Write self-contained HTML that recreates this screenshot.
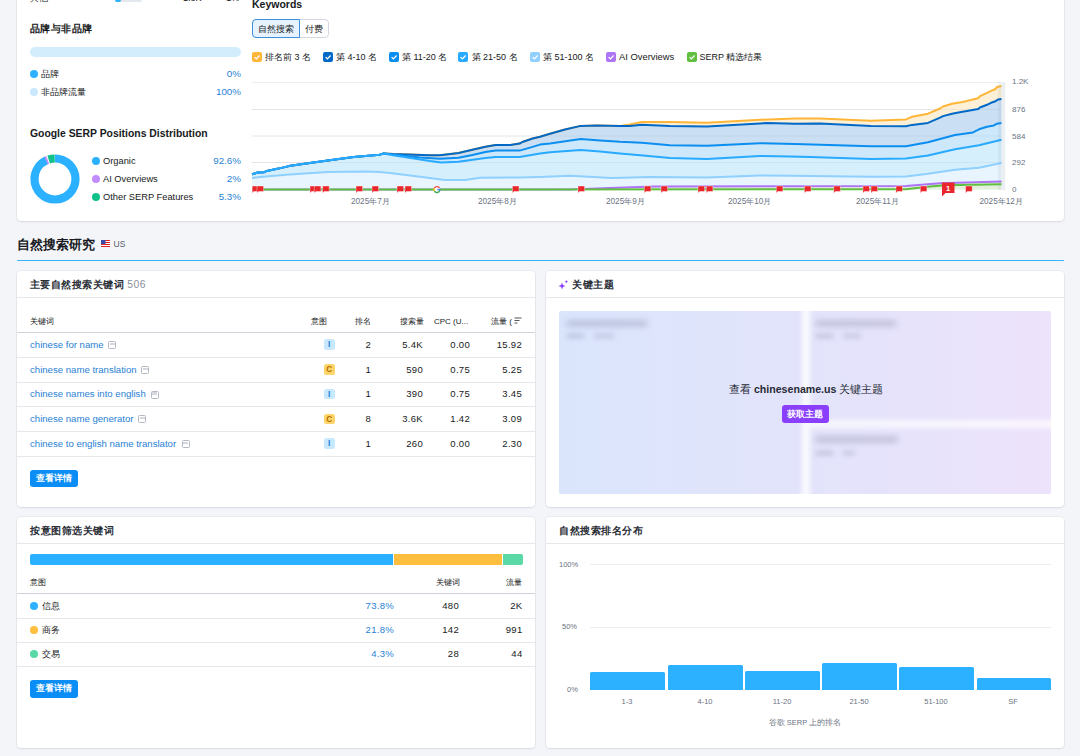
<!DOCTYPE html>
<html><head><meta charset="utf-8">
<style>
*{box-sizing:border-box;margin:0;padding:0}
html,body{width:1080px;height:756px;overflow:hidden;background:#f4f5f9;font-family:"Liberation Sans",sans-serif;color:#171a22}
.a{position:absolute;white-space:nowrap}
.card{position:absolute;background:#fff;border-radius:4px;box-shadow:0 0 0 1px rgba(20,30,60,0.04),0 1px 2px rgba(20,30,60,0.08)}
.t{font-size:9px;line-height:12px}
.g{color:#6b7382}
.lnk{color:#2a7fd4}
.hd{font-weight:bold}
.dot{position:absolute;width:8px;height:8px;border-radius:50%}
.hline{position:absolute;height:1px;background:#e6e8ee}
.cb{position:absolute;width:10px;height:10px;border-radius:2px}
.cb svg{position:absolute;left:0;top:0}
.badge{position:absolute;width:10.5px;height:10.5px;border-radius:2.5px;font-size:8.3px;font-weight:bold;line-height:11.2px;text-align:center}
.btn{position:absolute;background:#0a8df5;color:#fff;font-weight:bold;font-size:8.5px;border-radius:3px;text-align:center}
.ico{position:absolute;width:8px;height:8px;border:1px solid #b3b8c2;border-radius:1.5px}
.ico:after{content:"";position:absolute;left:0.5px;right:0.5px;top:0.5px;height:2.5px;background:#d5d8de}
.r{text-align:right}
</style></head><body>

<!-- top card -->
<div class="card" style="left:17px;top:-10px;width:1047px;height:230.5px"></div>
<div class="a t" style="left:30px;top:-8px;">其他</div>
<div class="a" style="left:115px;top:-2px;width:27px;height:4px;border-radius:2px;background:#e3e7ee"></div>
<div class="a" style="left:115px;top:-2px;width:6px;height:4px;border-radius:2px;background:#2bb1ff"></div>
<div class="a t" style="left:183px;top:-8px;">1.8K</div>
<div class="a t" style="left:221px;top:-8px;">&lt;1%</div>

<div class="a hd" style="left:30px;top:22px;font-size:10.2px;letter-spacing:0.45px;line-height:14px">品牌与非品牌</div>
<div class="a" style="left:30px;top:47px;width:211px;height:10px;border-radius:5px;background:#d4edfd"></div>
<div class="dot" style="left:30px;top:70px;background:#2bb1ff"></div>
<div class="a t" style="left:41px;top:68px;font-size:9.3px">品牌</div>
<div class="a t lnk r" style="left:180px;width:61px;top:68px;font-size:9.8px">0%</div>
<div class="dot" style="left:30px;top:88px;background:#c9e8fd"></div>
<div class="a t" style="left:41px;top:86px;font-size:9.3px">非品牌流量</div>
<div class="a t lnk r" style="left:180px;width:61px;top:86px;font-size:9.8px">100%</div>

<div class="a hd" style="left:30px;top:127px;font-size:10.4px;line-height:14px">Google SERP Positions Distribution</div>
<svg class="a" style="left:29.6px;top:153.6px" width="50" height="50" viewBox="0 0 50 50">
  <g transform="translate(25,25)">
    <circle r="20.5" fill="none" stroke="#2bb1ff" stroke-width="8.2" stroke-dasharray="119.3 200" transform="rotate(-90)"/>
    <circle r="20.5" fill="none" stroke="#c28cff" stroke-width="8.2" stroke-dasharray="1.9 200" transform="rotate(244)"/>
    <circle r="20.5" fill="none" stroke="#10c18a" stroke-width="8.2" stroke-dasharray="6.2 200" transform="rotate(252)"/>
  </g>
</svg>
<div class="dot" style="left:92px;top:156.5px;background:#2bb1ff"></div>
<div class="a t" style="left:103px;top:154.5px;font-size:9.3px">Organic</div>
<div class="a t lnk r" style="left:180px;width:61px;top:154.5px;font-size:9.8px">92.6%</div>
<div class="dot" style="left:92px;top:174.5px;background:#c28cff"></div>
<div class="a t" style="left:103px;top:172.5px;font-size:9.3px">AI Overviews</div>
<div class="a t lnk r" style="left:180px;width:61px;top:172.5px;font-size:9.8px">2%</div>
<div class="dot" style="left:92px;top:192.5px;background:#10c18a"></div>
<div class="a t" style="left:103px;top:190.5px;font-size:9.3px">Other SERP Features</div>
<div class="a t lnk r" style="left:180px;width:61px;top:190.5px;font-size:9.8px">5.3%</div>

<!-- keywords chart -->
<div class="a hd" style="left:252px;top:-3.5px;font-size:10.5px;line-height:14px">Keywords</div>
<div class="a" style="left:252px;top:19px;width:77px;height:19px;border:1px solid #d3d8e0;border-radius:4px"></div>
<div class="a" style="left:252px;top:19px;width:48px;height:19px;border:1px solid #3d8fe0;border-radius:4px 0 0 4px;background:#e6f3fe"></div>
<div class="a t" style="left:258px;top:23px">自然搜索</div>
<div class="a t" style="left:305px;top:23px">付费</div>

<div class="cb" style="left:252px;top:51.5px;background:#ffb638"><svg width="10" height="10"><path d="M2.6 5.1l1.8 1.8 3.2-3.4" stroke="#fff" stroke-width="1.3" fill="none"/></svg></div>
<div class="a t" style="left:265px;top:51px">排名前 3 名</div>
<div class="cb" style="left:323px;top:51.5px;background:#0068c6"><svg width="10" height="10"><path d="M2.6 5.1l1.8 1.8 3.2-3.4" stroke="#fff" stroke-width="1.3" fill="none"/></svg></div>
<div class="a t" style="left:336px;top:51px">第 4-10 名</div>
<div class="cb" style="left:389px;top:51.5px;background:#0b8ef0"><svg width="10" height="10"><path d="M2.6 5.1l1.8 1.8 3.2-3.4" stroke="#fff" stroke-width="1.3" fill="none"/></svg></div>
<div class="a t" style="left:402px;top:51px">第 11-20 名</div>
<div class="cb" style="left:458px;top:51.5px;background:#27aaff"><svg width="10" height="10"><path d="M2.6 5.1l1.8 1.8 3.2-3.4" stroke="#fff" stroke-width="1.3" fill="none"/></svg></div>
<div class="a t" style="left:471.5px;top:51px">第 21-50 名</div>
<div class="cb" style="left:530px;top:51.5px;background:#8fd0ff"><svg width="10" height="10"><path d="M2.6 5.1l1.8 1.8 3.2-3.4" stroke="#fff" stroke-width="1.3" fill="none"/></svg></div>
<div class="a t" style="left:543px;top:51px">第 51-100 名</div>
<div class="cb" style="left:605.5px;top:51.5px;background:#ad74f6"><svg width="10" height="10"><path d="M2.6 5.1l1.8 1.8 3.2-3.4" stroke="#fff" stroke-width="1.3" fill="none"/></svg></div>
<div class="a t" style="left:619px;top:51px;font-size:9.4px">AI Overviews</div>
<div class="cb" style="left:686.5px;top:51.5px;background:#60bf3f"><svg width="10" height="10"><path d="M2.6 5.1l1.8 1.8 3.2-3.4" stroke="#fff" stroke-width="1.3" fill="none"/></svg></div>
<div class="a t" style="left:699.5px;top:51px">SERP 精选结果</div>

<svg class="a" style="left:0;top:0" width="1080" height="220" viewBox="0 0 1080 220">
  <g stroke="#eceef2" stroke-width="1">
    <line x1="252" y1="82.5" x2="1001" y2="82.5"/>
    <line x1="252" y1="109.5" x2="1001" y2="109.5"/>
    <line x1="252" y1="136" x2="1001" y2="136"/>
    <line x1="252" y1="162.5" x2="1001" y2="162.5"/>
  </g>
<polygon points="252,174.2 257.8,172.5 264.3,172.2 266.9,170.9 278.5,168.6 288.9,166.1 304.5,163.8 327.8,160.6 353.8,157.1 379.7,154.7 383.6,153.4 393,154 430,155.2 440,155.2 458.5,152.9 472.4,149.8 485.4,146.7 495.6,145 510.4,145 519.6,143.6 522.4,142 532.6,138.5 540,136.7 550,133.7 565,129.5 580.7,125.9 597,125.6 620,126 629.6,124.4 641.8,122 670,122 707,122.8 760,119.8 795,118.5 820,118.4 871,120.8 906,119.4 912,116.8 928,113.7 940,108.5 943,106.5 952,103.8 961,102.2 967,100.9 974,99.2 978,98.2 980,96.2 987,92.9 991,90.9 995,89.3 997,87 1001.5,86 1001.5,98.9 998,99.5 995.5,101.2 991,102.8 987,104.8 980,107.5 978,109.1 967,111.1 961,112.1 952,113.8 943,116.1 940,117.7 928,122.9 912,124.9 906,126.3 871,125.9 820,123.5 795,123.7 767,123.1 760,123.4 707,126.5 670,126 641.8,124.8 629.6,126 620,126 597,125.6 580.7,125.9 565,129.5 550,133.7 540,136.7 532.6,138.5 522.4,142 519.6,143.6 510.4,145 495.6,145 485.4,146.7 472.4,149.8 458.5,152.9 440,155.2 430,155.2 393,154 383.6,153.4 379.7,154.7 353.8,157.1 327.8,160.6 304.5,163.8 288.9,166.1 278.5,168.6 266.9,170.9 264.3,172.2 257.8,172.5 252,174.2" fill="#fdf0d6"/>
<polygon points="252,174.2 257.8,172.5 264.3,172.2 266.9,170.9 278.5,168.6 288.9,166.1 304.5,163.8 327.8,160.6 353.8,157.1 379.7,154.7 383.6,153.4 393,154 430,155.2 440,155.2 458.5,152.9 472.4,149.8 485.4,146.7 495.6,145 510.4,145 519.6,143.6 522.4,142 532.6,138.5 540,136.7 550,133.7 565,129.5 580.7,125.9 597,125.6 620,126 629.6,126 641.8,124.8 670,126 707,126.5 760,123.4 767,123.1 795,123.7 820,123.5 871,125.9 906,126.3 912,124.9 928,122.9 940,117.7 943,116.1 952,113.8 961,112.1 967,111.1 978,109.1 980,107.5 987,104.8 991,102.8 995.5,101.2 998,99.5 1001.5,98.9 1001.5,123 997,123.7 994,125.4 987,126.7 979,129.3 973,132.4 955,135 928,142.2 906,146.3 871,146.3 795,144 760,143.2 707,145.8 670,145.2 641.8,142.8 620,141.8 600,140.4 580.7,139.1 550,143.5 540,144.6 532.6,146.9 519.6,150.6 495.6,150.6 485.4,152 472.4,155 458.5,157.8 440,158.7 420,157.5 393,154.6 383.6,153.4 379.7,154.7 353.8,157.1 327.8,160.6 304.5,163.8 288.9,166.1 278.5,168.6 266.9,170.9 264.3,172.2 257.8,172.5 252,174.2" fill="#cadff3"/>
<polygon points="252,174.2 257.8,172.5 264.3,172.2 266.9,170.9 278.5,168.6 288.9,166.1 304.5,163.8 327.8,160.6 353.8,157.1 379.7,154.7 383.6,153.4 393,154.6 420,157.5 440,158.7 458.5,157.8 472.4,155 485.4,152 495.6,150.6 519.6,150.6 532.6,146.9 540,144.6 550,143.5 580.7,139.1 600,140.4 620,141.8 641.8,142.8 670,145.2 707,145.8 760,143.2 795,144 871,146.3 906,146.3 928,142.2 955,135 973,132.4 979,129.3 987,126.7 994,125.4 997,123.7 1001.5,123 1001.5,139.8 979,145.3 955,149.3 928,155.4 906,158.5 871,158.9 810,157 790,156.5 760,156 707,159 670,158 643,155.5 620,153.4 600,151.5 580.7,149.9 550,152.2 540,153.4 519.6,157 495.6,157 485.4,158 458.5,161.7 441,162.4 430,161 393,155.2 383.6,153.4 379.7,154.7 353.8,157.1 327.8,160.6 304.5,163.8 288.9,166.1 278.5,168.6 266.9,170.9 264.3,172.2 257.8,172.5 252,174.2" fill="#cde8fb"/>
<polygon points="252,174.2 257.8,172.5 264.3,172.2 266.9,170.9 278.5,168.6 288.9,166.1 304.5,163.8 327.8,160.6 353.8,157.1 379.7,154.7 383.6,153.4 393,155.2 430,161 441,162.4 458.5,161.7 485.4,158 495.6,157 519.6,157 540,153.4 550,152.2 580.7,149.9 600,151.5 620,153.4 643,155.5 670,158 707,159 760,156 790,156.5 810,157 871,158.9 906,158.5 928,155.4 955,149.3 979,145.3 1001.5,139.8 1001.5,163 979,167.7 955,169.7 928,173.8 906,176.4 871,176.8 790,175.8 760,175.4 707,177.4 650,177 612,178 570,175.8 540,177 520,177.4 480,177.8 465,180 445,180 430,178 400,174.2 390,172.9 379.7,172 366.7,171.6 327.8,172 308.4,173.3 286.3,174.8 263,176.8 252,178.1" fill="#d6effd"/>
<polygon points="252,178.1 263,176.8 286.3,174.8 308.4,173.3 327.8,172 366.7,171.6 379.7,172 390,172.9 400,174.2 430,178 445,180 465,180 480,177.8 520,177.4 540,177 570,175.8 612,178 650,177 707,177.4 760,175.4 790,175.8 871,176.8 906,176.4 928,173.8 955,169.7 979,167.7 1001.5,163 1001,189.5 252,189.5" fill="#e9f5fe"/>
<polygon points="252,189.4 570,189.4 610,188 654,186.6 906,186 940,183.2 1001.5,181.6 1001.5,184.2 945,185.2 930,186.5 906,189.3 252,189.5" fill="#e6efe0"/>
<polygon points="252,189.5 906,189.3 930,186.5 945,185.2 1001.5,184.2 1001,189.5 252,189.5" fill="#e3f1dc"/>
<g stroke="rgba(60,70,90,0.06)" stroke-width="1"><line x1="252" y1="109.5" x2="1001" y2="109.5"/><line x1="252" y1="136" x2="1001" y2="136"/><line x1="252" y1="162.5" x2="1001" y2="162.5"/></g>
<polyline points="252,189.4 570,189.4 610,188 654,186.6 906,186 940,183.2 1001.5,181.6" fill="none" stroke="#ad74f6" stroke-width="2" stroke-linejoin="round"/>
<polyline points="252,189.5 906,189.3 930,186.5 945,185.2 1001.5,184.2" fill="none" stroke="#60bf3f" stroke-width="2" stroke-linejoin="round"/>
<polyline points="252,174.2 257.8,172.5 264.3,172.2 266.9,170.9 278.5,168.6 288.9,166.1 304.5,163.8 327.8,160.6 353.8,157.1 379.7,154.7 383.6,153.4 393,154 430,155.2 440,155.2 458.5,152.9 472.4,149.8 485.4,146.7 495.6,145 510.4,145 519.6,143.6 522.4,142 532.6,138.5 540,136.7 550,133.7 565,129.5 580.7,125.9 597,125.6 620,126 629.6,124.4 641.8,122 670,122 707,122.8 760,119.8 795,118.5 820,118.4 871,120.8 906,119.4 912,116.8 928,113.7 940,108.5 943,106.5 952,103.8 961,102.2 967,100.9 974,99.2 978,98.2 980,96.2 987,92.9 991,90.9 995,89.3 997,87 1001.5,86" fill="none" stroke="#ffb638" stroke-width="2" stroke-linejoin="round"/>
<polyline points="252,174.2 257.8,172.5 264.3,172.2 266.9,170.9 278.5,168.6 288.9,166.1 304.5,163.8 327.8,160.6 353.8,157.1 379.7,154.7 383.6,153.4 393,154 430,155.2 440,155.2 458.5,152.9 472.4,149.8 485.4,146.7 495.6,145 510.4,145 519.6,143.6 522.4,142 532.6,138.5 540,136.7 550,133.7 565,129.5 580.7,125.9 597,125.6 620,126 629.6,126 641.8,124.8 670,126 707,126.5 760,123.4 767,123.1 795,123.7 820,123.5 871,125.9 906,126.3 912,124.9 928,122.9 940,117.7 943,116.1 952,113.8 961,112.1 967,111.1 978,109.1 980,107.5 987,104.8 991,102.8 995.5,101.2 998,99.5 1001.5,98.9" fill="none" stroke="#0068c6" stroke-width="2" stroke-linejoin="round"/>
<polyline points="252,174.2 257.8,172.5 264.3,172.2 266.9,170.9 278.5,168.6 288.9,166.1 304.5,163.8 327.8,160.6 353.8,157.1 379.7,154.7 383.6,153.4 393,154.6 420,157.5 440,158.7 458.5,157.8 472.4,155 485.4,152 495.6,150.6 519.6,150.6 532.6,146.9 540,144.6 550,143.5 580.7,139.1 600,140.4 620,141.8 641.8,142.8 670,145.2 707,145.8 760,143.2 795,144 871,146.3 906,146.3 928,142.2 955,135 973,132.4 979,129.3 987,126.7 994,125.4 997,123.7 1001.5,123" fill="none" stroke="#0b8ef0" stroke-width="2" stroke-linejoin="round"/>
<polyline points="252,174.2 257.8,172.5 264.3,172.2 266.9,170.9 278.5,168.6 288.9,166.1 304.5,163.8 327.8,160.6 353.8,157.1 379.7,154.7 383.6,153.4 393,155.2 430,161 441,162.4 458.5,161.7 485.4,158 495.6,157 519.6,157 540,153.4 550,152.2 580.7,149.9 600,151.5 620,153.4 643,155.5 670,158 707,159 760,156 790,156.5 810,157 871,158.9 906,158.5 928,155.4 955,149.3 979,145.3 1001.5,139.8" fill="none" stroke="#27aaff" stroke-width="2" stroke-linejoin="round"/>
<polyline points="252,178.1 263,176.8 286.3,174.8 308.4,173.3 327.8,172 366.7,171.6 379.7,172 390,172.9 400,174.2 430,178 445,180 465,180 480,177.8 520,177.4 540,177 570,175.8 612,178 650,177 707,177.4 760,175.4 790,175.8 871,176.8 906,176.4 928,173.8 955,169.7 979,167.7 1001.5,163" fill="none" stroke="#8fd0ff" stroke-width="2" stroke-linejoin="round"/>
<path d="M252.2 186h6.6v5.5h-5.1l-1.5 1.7z" fill="#e8262c" stroke="#fff" stroke-width="0.4"/>
<path d="M257 186h6.6v5.5h-5.1l-1.5 1.7z" fill="#e8262c" stroke="#fff" stroke-width="0.4"/>
<path d="M310 186h6.6v5.5h-5.1l-1.5 1.7z" fill="#e8262c" stroke="#fff" stroke-width="0.4"/>
<path d="M314.3 186h6.6v5.5h-5.1l-1.5 1.7z" fill="#e8262c" stroke="#fff" stroke-width="0.4"/>
<path d="M322.6 186h6.6v5.5h-5.1l-1.5 1.7z" fill="#e8262c" stroke="#fff" stroke-width="0.4"/>
<path d="M356 186h6.6v5.5h-5.1l-1.5 1.7z" fill="#e8262c" stroke="#fff" stroke-width="0.4"/>
<path d="M372 186h6.6v5.5h-5.1l-1.5 1.7z" fill="#e8262c" stroke="#fff" stroke-width="0.4"/>
<path d="M397 186h6.6v5.5h-5.1l-1.5 1.7z" fill="#e8262c" stroke="#fff" stroke-width="0.4"/>
<path d="M405 186h6.6v5.5h-5.1l-1.5 1.7z" fill="#e8262c" stroke="#fff" stroke-width="0.4"/>
<path d="M512.4 186h6.6v5.5h-5.1l-1.5 1.7z" fill="#e8262c" stroke="#fff" stroke-width="0.4"/>
<path d="M578 186h6.6v5.5h-5.1l-1.5 1.7z" fill="#e8262c" stroke="#fff" stroke-width="0.4"/>
<path d="M644.3 186h6.6v5.5h-5.1l-1.5 1.7z" fill="#e8262c" stroke="#fff" stroke-width="0.4"/>
<path d="M661 186h6.6v5.5h-5.1l-1.5 1.7z" fill="#e8262c" stroke="#fff" stroke-width="0.4"/>
<path d="M698 186h6.6v5.5h-5.1l-1.5 1.7z" fill="#e8262c" stroke="#fff" stroke-width="0.4"/>
<path d="M706.3 186h6.6v5.5h-5.1l-1.5 1.7z" fill="#e8262c" stroke="#fff" stroke-width="0.4"/>
<path d="M776.3 186h6.6v5.5h-5.1l-1.5 1.7z" fill="#e8262c" stroke="#fff" stroke-width="0.4"/>
<path d="M804.4 186h6.6v5.5h-5.1l-1.5 1.7z" fill="#e8262c" stroke="#fff" stroke-width="0.4"/>
<path d="M833.8 186h6.6v5.5h-5.1l-1.5 1.7z" fill="#e8262c" stroke="#fff" stroke-width="0.4"/>
<path d="M862.9 186h6.6v5.5h-5.1l-1.5 1.7z" fill="#e8262c" stroke="#fff" stroke-width="0.4"/>
<path d="M871 186h6.6v5.5h-5.1l-1.5 1.7z" fill="#e8262c" stroke="#fff" stroke-width="0.4"/>
<path d="M895.9 186h6.6v5.5h-5.1l-1.5 1.7z" fill="#e8262c" stroke="#fff" stroke-width="0.4"/>
<path d="M920.3 186h6.6v5.5h-5.1l-1.5 1.7z" fill="#e8262c" stroke="#fff" stroke-width="0.4"/>
<path d="M965.6 186h6.6v5.5h-5.1l-1.5 1.7z" fill="#e8262c" stroke="#fff" stroke-width="0.4"/>
  <rect x="998" y="82" width="4" height="108" fill="rgba(90,110,140,0.08)"/><rect x="1002" y="82" width="3.2" height="108" fill="#eceff2"/>
  <path d="M942 182.5h12.5v10.5h-9l-3.5 3.5z" fill="#e8262c"/>
  <text x="948.2" y="191" font-size="7.5" font-weight="bold" fill="#fff" text-anchor="middle" font-family="Liberation Sans">1</text>
  <g transform="translate(437,189.6)" fill="none" stroke-width="1.4">
    <circle r="3" fill="#fff" stroke="none"/>
    <path d="M2.6 -1.5 A3 3 0 0 0 -2.6 -1.5" stroke="#ea4335"/>
    <path d="M-2.6 -1.5 A3 3 0 0 0 -2.6 1.5" stroke="#fbbc05"/>
    <path d="M-2.6 1.5 A3 3 0 0 0 2.9 0.6" stroke="#34a853"/>
    <path d="M3 0 H0.3" stroke="#4285f4"/>
    <path d="M2.9 0.6 A3 3 0 0 0 3 -0.2" stroke="#4285f4"/>
  </g>
</svg>
<div class="a t g" style="left:1012px;top:76.0px;font-size:8px">1.2K</div>
<div class="a t g" style="left:1012px;top:103.5px;font-size:8px">876</div>
<div class="a t g" style="left:1012px;top:130.5px;font-size:8px">584</div>
<div class="a t g" style="left:1012px;top:157.0px;font-size:8px">292</div>
<div class="a t g" style="left:1012px;top:184.0px;font-size:8px">0</div>
<div class="a t g" style="left:351px;top:195.5px;font-size:8.2px">2025年7月</div>
<div class="a t g" style="left:478px;top:195.5px;font-size:8.2px">2025年8月</div>
<div class="a t g" style="left:606px;top:195.5px;font-size:8.2px">2025年9月</div>
<div class="a t g" style="left:728px;top:195.5px;font-size:8.2px">2025年10月</div>
<div class="a t g" style="left:856px;top:195.5px;font-size:8.2px">2025年11月</div>
<div class="a t g" style="left:979.5px;top:195.5px;font-size:8.2px">2025年12月</div>

<!-- section header -->
<div class="a hd" style="left:17px;top:236px;font-size:13px;line-height:17px">自然搜索研究</div>
<svg class="a" style="left:101px;top:240px" width="9" height="7"><rect width="9" height="7" fill="#fff"/><rect y="0" width="9" height="1" fill="#d22"/><rect y="2" width="9" height="1" fill="#d22"/><rect y="4" width="9" height="1" fill="#d22"/><rect y="6" width="9" height="1" fill="#d22"/><rect width="4.5" height="4" fill="#3b4aa8"/></svg>
<div class="a t" style="left:113.5px;top:238px;font-size:8.5px;color:#555c6b">US</div>
<div class="a" style="left:17px;top:259.5px;width:1047px;height:1.6px;background:#34b3ff;border-radius:1px"></div>

<!-- card: top organic keywords -->
<div class="card" style="left:17px;top:271px;width:518px;height:236px"></div>
<div class="a" style="left:30px;top:277.5px;font-size:10.2px;letter-spacing:0.45px;line-height:14px;font-weight:600;color:#2a2e37">主要自然搜索关键词 <span style="font-weight:normal;color:#8a909c;font-size:10.3px">506</span></div>
<div class="hline" style="left:17px;top:297px;width:518px"></div>
<div class="a t" style="left:30px;top:315.5px;font-size:8px">关键词</div>
<div class="a t" style="left:311px;top:315.5px;font-size:8px">意图</div>
<div class="a t" style="left:355px;top:315.5px;font-size:8px">排名</div>
<div class="a t" style="left:400px;top:315.5px;font-size:8px">搜索量</div>
<div class="a t" style="left:434px;top:315.5px;font-size:8px">CPC (U...</div>
<div class="a t" style="left:491px;top:315.5px;font-size:8px">流量 (</div>
<svg class="a" style="left:514px;top:317px" width="8" height="7"><path d="M0.5 1h7M0.5 3.5h5M0.5 6h3" stroke="#555" stroke-width="1"/></svg>
<div class="hline" style="left:17px;top:332px;width:518px;background:#cfd2d9"></div>

<div class="a t lnk" style="left:30px;top:338.5px;font-size:9.6px">chinese for name</div><div class="ico" style="left:108px;top:341px"></div>
<div class="badge" style="left:324px;top:339.3px;background:#c8e8fd;color:#1f7ed8">I</div>
<div class="a t r" style="left:330px;width:41px;top:338.5px;font-size:9.5px;letter-spacing:0.3px">2</div>
<div class="a t r" style="left:380px;width:43px;top:338.5px;font-size:9.5px;letter-spacing:0.3px">5.4K</div>
<div class="a t r" style="left:430px;width:40px;top:338.5px;font-size:9.5px;letter-spacing:0.3px">0.00</div>
<div class="a t r" style="left:480px;width:42px;top:338.5px;font-size:9.5px;letter-spacing:0.3px">15.92</div>
<div class="hline" style="left:17px;top:357px;width:518px"></div>

<div class="a t lnk" style="left:30px;top:363.5px;font-size:9.6px">chinese name translation</div><div class="ico" style="left:141px;top:366px"></div>
<div class="badge" style="left:324px;top:364px;background:#fdd469;color:#b26d00">C</div>
<div class="a t r" style="left:330px;width:41px;top:363.5px;font-size:9.5px;letter-spacing:0.3px">1</div>
<div class="a t r" style="left:380px;width:43px;top:363.5px;font-size:9.5px;letter-spacing:0.3px">590</div>
<div class="a t r" style="left:430px;width:40px;top:363.5px;font-size:9.5px;letter-spacing:0.3px">0.75</div>
<div class="a t r" style="left:480px;width:42px;top:363.5px;font-size:9.5px;letter-spacing:0.3px">5.25</div>
<div class="hline" style="left:17px;top:381.5px;width:518px"></div>

<div class="a t lnk" style="left:30px;top:388px;font-size:9.6px">chinese names into english</div><div class="ico" style="left:150.5px;top:390.5px"></div>
<div class="badge" style="left:324px;top:388.8px;background:#c8e8fd;color:#1f7ed8">I</div>
<div class="a t r" style="left:330px;width:41px;top:388px;font-size:9.5px;letter-spacing:0.3px">1</div>
<div class="a t r" style="left:380px;width:43px;top:388px;font-size:9.5px;letter-spacing:0.3px">390</div>
<div class="a t r" style="left:430px;width:40px;top:388px;font-size:9.5px;letter-spacing:0.3px">0.75</div>
<div class="a t r" style="left:480px;width:42px;top:388px;font-size:9.5px;letter-spacing:0.3px">3.45</div>
<div class="hline" style="left:17px;top:406px;width:518px"></div>

<div class="a t lnk" style="left:30px;top:412.5px;font-size:9.6px">chinese name generator</div><div class="ico" style="left:138px;top:415px"></div>
<div class="badge" style="left:324px;top:413.5px;background:#fdd469;color:#b26d00">C</div>
<div class="a t r" style="left:330px;width:41px;top:412.5px;font-size:9.5px;letter-spacing:0.3px">8</div>
<div class="a t r" style="left:380px;width:43px;top:412.5px;font-size:9.5px;letter-spacing:0.3px">3.6K</div>
<div class="a t r" style="left:430px;width:40px;top:412.5px;font-size:9.5px;letter-spacing:0.3px">1.42</div>
<div class="a t r" style="left:480px;width:42px;top:412.5px;font-size:9.5px;letter-spacing:0.3px">3.09</div>
<div class="hline" style="left:17px;top:431px;width:518px"></div>

<div class="a t lnk" style="left:30px;top:437.5px;font-size:9.6px">chinese to english name translator</div><div class="ico" style="left:181.5px;top:440px"></div>
<div class="badge" style="left:324px;top:438.3px;background:#c8e8fd;color:#1f7ed8">I</div>
<div class="a t r" style="left:330px;width:41px;top:437.5px;font-size:9.5px;letter-spacing:0.3px">1</div>
<div class="a t r" style="left:380px;width:43px;top:437.5px;font-size:9.5px;letter-spacing:0.3px">260</div>
<div class="a t r" style="left:430px;width:40px;top:437.5px;font-size:9.5px;letter-spacing:0.3px">0.00</div>
<div class="a t r" style="left:480px;width:42px;top:437.5px;font-size:9.5px;letter-spacing:0.3px">2.30</div>
<div class="hline" style="left:17px;top:455.5px;width:518px"></div>

<div class="btn" style="left:30px;top:469.5px;width:48px;height:17.5px;line-height:17.5px">查看详情</div>

<!-- card: key topics -->
<div class="card" style="left:546px;top:271px;width:518px;height:236px"></div>
<svg class="a" style="left:558px;top:279px" width="11" height="11" viewBox="0 0 11 11"><path d="M4 3.5 L4.9 6.1 L7.5 7 L4.9 7.9 L4 10.5 L3.1 7.9 L0.5 7 L3.1 6.1Z" fill="#8b3dfc"/><path d="M8.3 0.8 L8.8 2.2 L10.2 2.7 L8.8 3.2 L8.3 4.6 L7.8 3.2 L6.4 2.7 L7.8 2.2Z" fill="#8b3dfc"/></svg>
<div class="a" style="left:572px;top:277.5px;font-size:10.2px;letter-spacing:0.65px;line-height:14px;font-weight:600;color:#2a2e37">关键主题</div>
<div class="hline" style="left:546px;top:297px;width:518px"></div>
<div class="a" style="left:559px;top:311px;width:492px;height:182.5px;border-radius:2px;overflow:hidden;background:linear-gradient(90deg,#dae5fc 0%,#e2e4fb 45%,#e6e3fb 70%,#ede3fb 100%)">
  <div class="a" style="left:243px;top:-5px;width:8px;height:195px;background:rgba(255,255,255,0.8);filter:blur(2.5px)"></div>
  <div class="a" style="left:250px;top:109px;width:250px;height:8px;background:rgba(255,255,255,0.7);filter:blur(2.5px)"></div>
  <div class="a" style="left:8px;top:9.5px;width:80px;height:5px;background:rgba(80,80,115,0.3);filter:blur(3px)"></div>
  <div class="a" style="left:8px;top:23px;width:17px;height:4px;background:rgba(80,80,115,0.24);filter:blur(2.5px)"></div>
  <div class="a" style="left:35px;top:23px;width:20px;height:4px;background:rgba(80,80,115,0.2);filter:blur(2.5px)"></div>
  <div class="a" style="left:257px;top:9.5px;width:80px;height:5px;background:rgba(80,80,115,0.3);filter:blur(3px)"></div>
  <div class="a" style="left:257px;top:23px;width:17px;height:4px;background:rgba(80,80,115,0.24);filter:blur(2.5px)"></div>
  <div class="a" style="left:284px;top:23px;width:18px;height:4px;background:rgba(80,80,115,0.2);filter:blur(2.5px)"></div>
  <div class="a" style="left:257px;top:125.5px;width:82px;height:5px;background:rgba(80,80,115,0.3);filter:blur(3px)"></div>
  <div class="a" style="left:257px;top:139.5px;width:17px;height:4px;background:rgba(80,80,115,0.24);filter:blur(2.5px)"></div>
  <div class="a" style="left:284px;top:139.5px;width:12px;height:4px;background:rgba(80,80,115,0.2);filter:blur(2.5px)"></div>
</div>
<div class="a" style="left:729px;top:382.5px;font-size:10.6px;line-height:13px;color:#272b35">查看 <b>chinesename.us</b> 关键主题</div>
<div class="a" style="left:781.5px;top:405px;width:47px;height:18px;border-radius:3px;background:#8a3ffc;color:#fff;font-weight:bold;font-size:8.5px;line-height:18px;text-align:center">获取主题</div>

<!-- card: intent -->
<div class="card" style="left:17px;top:517px;width:518px;height:231px"></div>
<div class="a" style="left:30px;top:523.5px;font-size:10.2px;letter-spacing:0.55px;line-height:14px;font-weight:600;color:#2a2e37">按意图筛选关键词</div>
<div class="hline" style="left:17px;top:543px;width:518px"></div>
<div class="a" style="left:30px;top:554px;width:363px;height:11px;background:#2bb1ff;border-radius:2px 0 0 2px"></div>
<div class="a" style="left:393.5px;top:554px;width:108.5px;height:11px;background:#ffbe3d"></div>
<div class="a" style="left:502.5px;top:554px;width:20px;height:11px;background:#5ad8a6;border-radius:0 2px 2px 0"></div>
<div class="a t" style="left:30px;top:577px;font-size:8px">意图</div>
<div class="a t" style="left:436px;top:577px;font-size:8px">关键词</div>
<div class="a t" style="left:506px;top:577px;font-size:8px">流量</div>
<div class="hline" style="left:17px;top:593px;width:518px;background:#cfd2d9"></div>
<div class="dot" style="left:30px;top:601.5px;background:#2bb1ff"></div>
<div class="a t" style="left:42px;top:599.5px">信息</div>
<div class="a t lnk r" style="left:340px;width:54px;top:599.5px;font-size:9.5px;letter-spacing:0.3px">73.8%</div>
<div class="a t r" style="left:410px;width:49px;top:599.5px;font-size:9.5px;letter-spacing:0.3px">480</div>
<div class="a t r" style="left:470px;width:52.5px;top:599.5px;font-size:9.5px;letter-spacing:0.3px">2K</div>
<div class="hline" style="left:17px;top:618px;width:518px"></div>
<div class="dot" style="left:30px;top:626px;background:#ffbe3d"></div>
<div class="a t" style="left:42px;top:624px">商务</div>
<div class="a t lnk r" style="left:340px;width:54px;top:624px;font-size:9.5px;letter-spacing:0.3px">21.8%</div>
<div class="a t r" style="left:410px;width:49px;top:624px;font-size:9.5px;letter-spacing:0.3px">142</div>
<div class="a t r" style="left:470px;width:52.5px;top:624px;font-size:9.5px;letter-spacing:0.3px">991</div>
<div class="hline" style="left:17px;top:642px;width:518px"></div>
<div class="dot" style="left:30px;top:650px;background:#5ad8a6"></div>
<div class="a t" style="left:42px;top:648px">交易</div>
<div class="a t lnk r" style="left:340px;width:54px;top:648px;font-size:9.5px;letter-spacing:0.3px">4.3%</div>
<div class="a t r" style="left:410px;width:49px;top:648px;font-size:9.5px;letter-spacing:0.3px">28</div>
<div class="a t r" style="left:470px;width:52.5px;top:648px;font-size:9.5px;letter-spacing:0.3px">44</div>
<div class="hline" style="left:17px;top:666px;width:518px"></div>
<div class="btn" style="left:30px;top:680px;width:48px;height:17.5px;line-height:17.5px">查看详情</div>

<!-- card: ranking distribution -->
<div class="card" style="left:546px;top:517px;width:518px;height:231px"></div>
<div class="a" style="left:559px;top:523.5px;font-size:10.2px;letter-spacing:0.55px;line-height:14px;font-weight:600;color:#2a2e37">自然搜索排名分布</div>
<div class="hline" style="left:546px;top:543px;width:518px"></div>
<div class="a t g" style="left:559px;top:558.5px;font-size:7.5px">100%</div>
<div class="a t g" style="left:562px;top:621px;font-size:7.5px">50%</div>
<div class="a t g" style="left:567px;top:683.5px;font-size:7.5px">0%</div>
<div class="hline" style="left:590px;top:564px;width:461px;background:#eceef2"></div>
<div class="hline" style="left:590px;top:626.5px;width:461px;background:#eceef2"></div>
<div class="a" style="left:590px;top:671.5px;width:75px;height:18.5px;background:#2bb1ff;border-radius:1.5px 1.5px 0 0"></div>
<div class="a" style="left:667.5px;top:664.5px;width:75px;height:25.5px;background:#2bb1ff;border-radius:1.5px 1.5px 0 0"></div>
<div class="a" style="left:745px;top:671px;width:74.5px;height:19px;background:#2bb1ff;border-radius:1.5px 1.5px 0 0"></div>
<div class="a" style="left:822px;top:662.5px;width:75px;height:27.5px;background:#2bb1ff;border-radius:1.5px 1.5px 0 0"></div>
<div class="a" style="left:899px;top:667px;width:75px;height:23px;background:#2bb1ff;border-radius:1.5px 1.5px 0 0"></div>
<div class="a" style="left:976.5px;top:677.5px;width:74.5px;height:12.5px;background:#2bb1ff;border-radius:1.5px 1.5px 0 0"></div>
<div class="a t g" style="left:597px;width:60px;top:696px;font-size:7.5px;text-align:center">1-3</div>
<div class="a t g" style="left:675px;width:60px;top:696px;font-size:7.5px;text-align:center">4-10</div>
<div class="a t g" style="left:752px;width:60px;top:696px;font-size:7.5px;text-align:center">11-20</div>
<div class="a t g" style="left:829px;width:60px;top:696px;font-size:7.5px;text-align:center">21-50</div>
<div class="a t g" style="left:906px;width:60px;top:696px;font-size:7.5px;text-align:center">51-100</div>
<div class="a t g" style="left:983px;width:60px;top:696px;font-size:7.5px;text-align:center">SF</div>
<div class="a t g" style="left:755px;width:100px;top:716.5px;font-size:7.5px;text-align:center">谷歌 SERP 上的排名</div>

</body></html>
